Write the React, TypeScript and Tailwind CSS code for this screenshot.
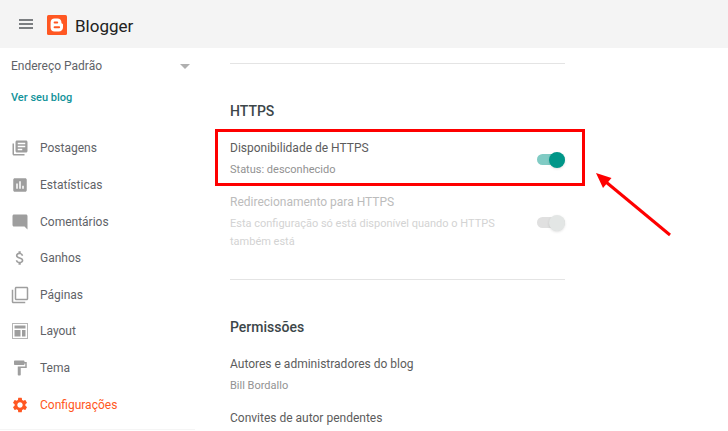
import { useState } from "react";
import type { ReactNode } from "react";
import {
  MdAttachMoney,
  MdFilterNone,
  MdFormatPaint,
  MdInsertChart,
  MdLibraryBooks,
  MdModeComment,
  MdSettings,
} from "react-icons/md";

function LayoutIcon() {
  return (
    <svg viewBox="0 0 16 16" className="size-4" fill="currentColor" aria-hidden="true">
      <path fillRule="evenodd" opacity="0.75" d="M0 0h16v16H0zM1 1v14h14V1z" />
      <path d="M2.500 2.500h11V5.500h-11zM2.500 7h6v6.500h-6zM10 7h3.500v6.500H10z" />
    </svg>
  );
}

function BloggerLogo() {
  return (
    <svg viewBox="0 0 20 20" className="size-5" aria-hidden="true">
      <rect width="20" height="20" rx="1.5" fill="#ff5722" />
      <path
        fill="#fff"
        fillRule="evenodd"
        d="M7.500 3.400h2.900c2.500 0 4 1.600 4 3.700 0 1 .2 1.500 1 1.700.5.1.6.4.6.9v2.600c0 2.500-1.700 4.200-4.200 4.200H7.500c-2.400 0-3.900-1.600-3.900-4V7.400c0-2.400 1.500-4 3.900-4zM7.600 6.500a1 1 0 0 0 0 2h2.600a1 1 0 0 0 0-2zM7.600 11.300a1 1 0 0 0 0 2h4.500a1 1 0 0 0 0-2z"
      />
    </svg>
  );
}

const navItems: { label: string; icon: ReactNode; active?: boolean }[] = [
  { label: "Postagens", icon: <MdLibraryBooks size={18} /> },
  { label: "Estatísticas", icon: <MdInsertChart size={18} /> },
  { label: "Comentários", icon: <MdModeComment size={18} /> },
  { label: "Ganhos", icon: <MdAttachMoney size={18} /> },
  { label: "Páginas", icon: <MdFilterNone size={18} /> },
  { label: "Layout", icon: <LayoutIcon /> },
  { label: "Tema", icon: <MdFormatPaint size={18} /> },
  { label: "Configurações", icon: <MdSettings size={18} />, active: true },
];

function Sidebar() {
  return (
    <aside className="w-[195px] shrink-0 self-start border-b border-[#f5f5f5] pb-1.5">
      <div className="relative mt-2">
        <select
          aria-label="Blog"
          className="block h-5 w-full appearance-none bg-transparent pl-[11px] text-xs leading-5 text-[#5f6368] outline-none"
        >
          <option>Endereço Padrão</option>
        </select>
        <span className="pointer-events-none absolute top-2 right-[5px] border-x-5 border-t-5 border-x-transparent border-t-[#b0b0b0]" />
      </div>
      <a href="#blog" className="mt-3 ml-[11px] block text-[11px] leading-5 font-medium text-[#12939a]">
        Ver seu blog
      </a>
      <nav className="mt-[22px] grid h-[293px] grid-rows-8">
        {navItems.map((item) => (
          <a
            key={item.label}
            href="#"
            aria-current={item.active ? "page" : undefined}
            className={`flex items-center gap-2.5 pl-2.5 text-xs ${item.active ? "text-[#ff5722]" : "text-[#5f6368]"}`}
          >
            <span className={`flex w-5 justify-center ${item.active ? "text-[#ff5722]" : "text-[#9e9e9e]"}`}>
              {item.icon}
            </span>
            {item.label}
          </a>
        ))}
      </nav>
    </aside>
  );
}

interface SwitchProps {
  id: string;
  checked?: boolean;
  disabled?: boolean;
  onChange?: (checked: boolean) => void;
}

function Switch({ id, checked = false, disabled, onChange }: SwitchProps) {
  return (
    <span className="relative mt-0.5 flex h-4 w-7 shrink-0 items-center">
      <input
        id={id}
        type="checkbox"
        role="switch"
        checked={checked}
        disabled={disabled}
        onChange={(e) => onChange?.(e.target.checked)}
        className="peer h-[11px] w-full appearance-none rounded-full bg-[#bdbdbd] checked:bg-[#80cbc4] disabled:bg-[#e0e0e0]"
      />
      <span className="pointer-events-none absolute top-0 left-0 size-4 rounded-full bg-white shadow-sm peer-checked:left-3 peer-checked:bg-[#009688] peer-disabled:left-3 peer-disabled:bg-[#e3e6e5]" />
    </span>
  );
}

function Section({ title, children }: { title: string; children: ReactNode }) {
  return (
    <section className="border-t border-[#e4e4e4] pt-[37px] pb-7">
      <h2 className="mb-[17px] text-sm leading-5 font-medium text-[#3c4649]">{title}</h2>
      <div className="space-y-[13px]">{children}</div>
    </section>
  );
}

const titleClass = "block text-xs leading-5";
const noteClass = "mt-[3px] text-[11px] leading-[18px]";

export default function App() {
  const [https, setHttps] = useState(true);

  return (
    <div className="h-screen overflow-hidden bg-white font-['Roboto',sans-serif]">
      <header className="flex h-12 items-center bg-[#f4f4f4] pt-0.5 pl-[19px]">
        <button aria-label="Menu" className="mr-3.5 mb-0.5 flex h-2.5 w-3.5 flex-col justify-between">
          <span className="h-0.5 w-full bg-[#7b7e81]" />
          <span className="h-0.5 w-full bg-[#7b7e81]" />
          <span className="h-0.5 w-full bg-[#7b7e81]" />
        </button>
        <BloggerLogo />
        <span className="mt-0.5 ml-2 text-[17px] leading-6 text-[#212121]">Blogger</span>
      </header>

      <div className="flex">
        <Sidebar />
        <main className="mr-[163px] ml-[35px] min-w-0 flex-1 pt-[15px]">
          <Section title="HTTPS">
            <div className="relative flex items-center justify-between">
              <div>
                <label htmlFor="https" className={`${titleClass} text-[#5c5c5c]`}>
                  Disponibilidade de HTTPS
                </label>
                <p className={`${noteClass} text-[#929292]`}>Status: desconhecido</p>
              </div>
              <Switch id="https" checked={https} onChange={setHttps} />
              {/* Highlight and pointer over the setting */}
              <div className="pointer-events-none absolute -top-[9px] -right-5 -bottom-[7px] -left-[15px] border-3 border-[#fe0000]" />
              <svg
                viewBox="0 0 76 64"
                className="pointer-events-none absolute top-[35px] left-full ml-[31px] h-16 w-[76px]"
                aria-hidden="true"
              >
                <path d="M10 9 74 62" stroke="#fe0000" strokeWidth="3" />
                <path d="M0 0 15.500 5 7 15z" fill="#fe0000" />
              </svg>
            </div>
            <div className="flex items-center justify-between">
              <div className="max-w-[270px]">
                <label htmlFor="redirect" className={`${titleClass} text-[#bcbcbc]`}>
                  Redirecionamento para HTTPS
                </label>
                <p className={`${noteClass} text-[#d3d3d3]`}>
                  Esta configuração só está disponível quando o HTTPS também está
                </p>
              </div>
              <Switch id="redirect" disabled />
            </div>
          </Section>

          <Section title="Permissões">
            <div>
              <h3 className={`${titleClass} text-[#5c5c5c]`}>Autores e administradores do blog</h3>
              <p className={`${noteClass} text-[#929292]`}>Bill Bordallo</p>
            </div>
            <h3 className={`${titleClass} text-[#5c5c5c]`}>Convites de autor pendentes</h3>
          </Section>
        </main>
      </div>
    </div>
  );
}
